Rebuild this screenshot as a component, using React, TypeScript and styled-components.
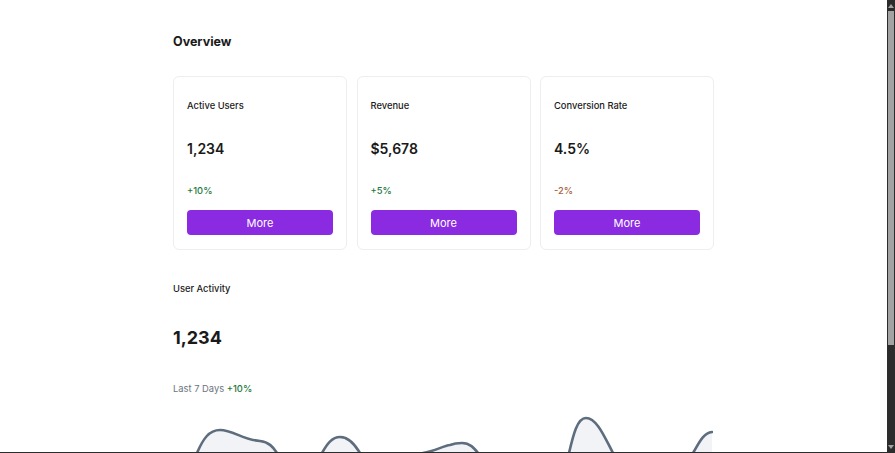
import React from "react";
import styled, { createGlobalStyle } from "styled-components";

const Global = createGlobalStyle`
  html, body { margin: 0; padding: 0; height: 100%; overflow: hidden; background: #fff; }
  body { font-family: Inter, "Liberation Sans", sans-serif; color: #1a1a1a; }
`;
const Frame = styled.div`
  display: flex; flex-direction: column; width: 895px; height: 453px; overflow: hidden;
`;
const Viewport = styled.div`
  flex: 1; min-height: 0; display: flex; overflow: hidden;
`;
const Main = styled.main`
  flex: 1; min-width: 0; padding: 32px 0 0 173px; overflow: hidden;
`;
const Content = styled.div`
  width: 541px; display: flex; flex-direction: column;
`;
const Title = styled.h1`
  margin: 0; font-size: 12.5px; line-height: 20px; font-weight: 700;
`;
const Cards = styled.div`
  margin-top: 24px; display: grid; grid-template-columns: repeat(3, 174px); gap: 9.5px;
`;
const Card = styled.section`
  box-sizing: border-box; height: 174px; padding: 13px; border: 1px solid #eceef1; border-radius: 6px;
  display: flex; flex-direction: column;
`;
const Label = styled.div`
  font-size: 9.35px; line-height: 14px; font-weight: 500; height: 14px; margin-top: 9px;
`;
const Value = styled.div`
  margin-top: 24px; font-size: 14px; line-height: 24px; font-weight: 600;
`;
const Delta = styled.div<{ $negative?: boolean }>`
  margin-top: 23px; font-size: 9.35px; line-height: 14px; font-weight: 500;
  color: ${p => (p.$negative ? "#a8623e" : "#1f7a3e")};
`;
const More = styled.button`
  margin-top: 12px; height: 25px; border: 0; border-radius: 4px; padding: 0; background: #8a2be2; color: #fff;
  font: 400 11px/26px Inter, "Liberation Sans", sans-serif;
`;
const SectionLabel = styled.div`
  margin-top: 32px; font-size: 9.35px; line-height: 14px; font-weight: 500;
`;
const BigValue = styled.div`
  margin-top: 27px; font-size: 18px; line-height: 30px; font-weight: 700;
`;
const Period = styled.div`
  margin-top: 29px; font-size: 9.35px; line-height: 14px; color: #6b7480;
`;
const Up = styled.span`
  color: #1f7a3e; font-weight: 500;
`;
const Chart = styled.svg`
  display: block; margin-top: 15px; width: 540px; height: 150px; flex: none;
`;
const Scrollbar = styled.aside`
  width: 8px; flex: none; background: #2c2c2c; display: flex; flex-direction: column; align-items: center;
`;
const ArrowCell = styled.div`
  height: 11px; flex: none; display: flex; align-items: center; justify-content: center;
`;
const Arrow = styled.div<{ $down?: boolean }>`
  width: 0; height: 0; border-left: 3px solid transparent; border-right: 3px solid transparent;
  ${p => (p.$down ? "border-top: 4px solid #a3a3a3;" : "border-bottom: 4px solid #a3a3a3;")}
`;
const Thumb = styled.div`
  height: 334px; width: 6px; flex: none; background: #a3a3a3;
`;
const Track = styled.div`
  flex: 1;
`;
const BottomEdge = styled.div`
  height: 1px; flex: none; background: #2c2c2c;
`;

const cards = [
  { label: "Active Users", value: "1,234", delta: "+10%" },
  { label: "Revenue", value: "$5,678", delta: "+5%" },
  { label: "Conversion Rate", value: "4.5%", delta: "-2%", negative: true },
];

const line =
  "M0 120 C8 95 16 60 24 42 C30 28 36 19 47 19 C60 19 70 29 87 30 C96 31 100 36 104 42 C116 60 135 60 149 42 C154 33 159 26 167 26 C176 26 182 34 187 42 C205 60 230 46 250 42 C262 40 270 35 277 34 C282 32 286 32 289 32 C297 32 301 37 305 42 C330 60 380 60 396 42 C400 25 404 7 413 7 C424 7 432 27 440 42 C470 70 505 70 520 42 C526 32 530 22 539 21";

export default function App() {
  return (
    <Frame>
      <Global />
      <Viewport>
        <Main>
          <Content>
            <Title>Overview</Title>
            <Cards>
              {cards.map(c => (
                <Card key={c.label}>
                  <Label>{c.label}</Label>
                  <Value>{c.value}</Value>
                  <Delta $negative={c.negative}>{c.delta}</Delta>
                  <More>More</More>
                </Card>
              ))}
            </Cards>
            <SectionLabel>User Activity</SectionLabel>
            <BigValue>1,234</BigValue>
            <Period>Last 7 Days <Up>+10%</Up></Period>
            <Chart viewBox="0 0 540 150" fill="none">
              <path d={line + " V150 H0 Z"} fill="#f1f3f6" />
              <path d={line} stroke="#5d6d7e" strokeWidth="2.6" strokeLinecap="round" />
            </Chart>
          </Content>
        </Main>
        <Scrollbar>
          <ArrowCell><Arrow /></ArrowCell>
          <Thumb />
          <Track />
          <ArrowCell><Arrow $down /></ArrowCell>
        </Scrollbar>
      </Viewport>
      <BottomEdge />
    </Frame>
  );
}
